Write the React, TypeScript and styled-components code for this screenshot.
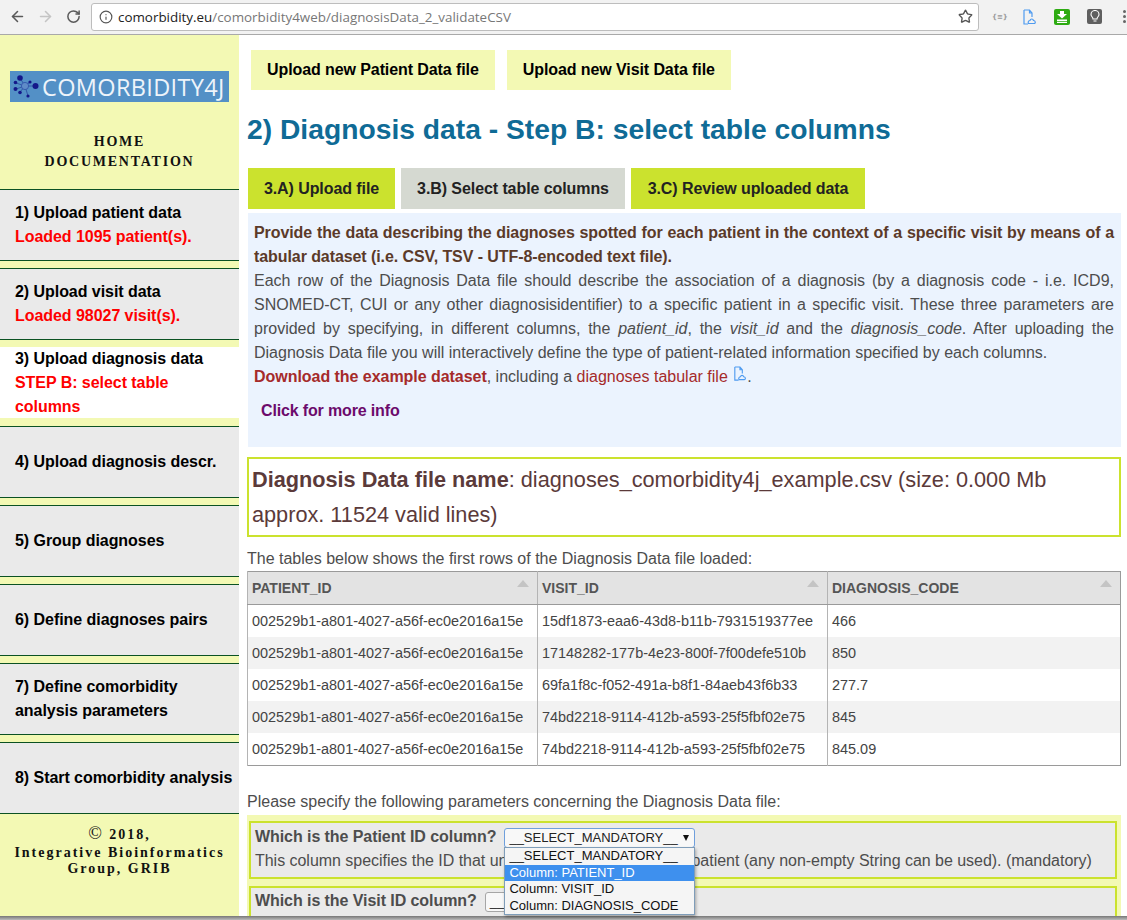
import React from "react";
import styled, { createGlobalStyle } from "styled-components";
import { ArrowLeft, ArrowRight, RotateCw, Info, Star } from "lucide-react";

const GlobalStyle = createGlobalStyle`
  html, body {
    margin: 0;
    padding: 0;
    height: 920px;
    overflow: hidden;
    background: #fff;
  }
  * { box-sizing: border-box; }
`;

const navItems = [
  { title: "1) Upload patient data", status: "Loaded 1095 patient(s)." },
  { title: "2) Upload visit data", status: "Loaded 98027 visit(s)." },
  { title: "3) Upload diagnosis data", status: "STEP B: select table columns", active: true },
  { title: "4) Upload diagnosis descr." },
  { title: "5) Group diagnoses" },
  { title: "6) Define diagnoses pairs" },
  { title: "7) Define comorbidity analysis parameters" },
  { title: "8) Start comorbidity analysis" },
];

const rows = [
  ["002529b1-a801-4027-a56f-ec0e2016a15e", "15df1873-eaa6-43d8-b11b-7931519377ee", "466"],
  ["002529b1-a801-4027-a56f-ec0e2016a15e", "17148282-177b-4e23-800f-7f00defe510b", "850"],
  ["002529b1-a801-4027-a56f-ec0e2016a15e", "69fa1f8c-f052-491a-b8f1-84aeb43f6b33", "277.7"],
  ["002529b1-a801-4027-a56f-ec0e2016a15e", "74bd2218-9114-412b-a593-25f5fbf02e75", "845"],
  ["002529b1-a801-4027-a56f-ec0e2016a15e", "74bd2218-9114-412b-a593-25f5fbf02e75", "845.09"],
];

function LogoMark() {
  return (
    <svg width="26" height="25" viewBox="0 0 26 25">
      <g stroke="#2a4aa0" strokeWidth="0.8">
        <path d="M12 12 L7 4 M12 12 L17 8 M12 12 L23 12 M12 12 L15 22 M12 12 L3 9 M12 12 L3 15 M12 12 L7 18" />
      </g>
      <circle cx="12" cy="12" r="3.6" fill="#5f8cc8" stroke="#2f4fa8" strokeWidth="0.8" />
      <g fill="#14188a">
        <circle cx="7" cy="4" r="2.8" />
        <circle cx="17" cy="8" r="1.6" />
        <circle cx="22.5" cy="12" r="3" />
        <circle cx="15" cy="22" r="1.6" />
        <circle cx="2.5" cy="8.5" r="1.8" />
        <circle cx="2.5" cy="15" r="2" />
        <circle cx="7" cy="18.5" r="1.8" />
      </g>
    </svg>
  );
}

function FileIcon({ size = 16 }: { size?: number }) {
  return (
    <svg width={size} height={size} viewBox="0 0 16 16" fill="none" stroke="#4f9bf0" strokeWidth="1.2">
      <path d="M3 1 H8.5 L11 4 V8 M8.5 1 V4 H11 M3 1 V15 H7" />
      <path d="M7.5 14.5 C6.5 12.5 8 11.5 9 11.5 C9.5 9.5 12 9.5 12.5 11.5 C14.5 11.5 15 14.5 13 14.5 Z" />
    </svg>
  );
}

export default function App() {
  return (
    <>
      <GlobalStyle />
      <Page>
        <BrowserBar>
          <NavIcon><ArrowLeft size={17} color="#5a5a5a" strokeWidth={2.2} /></NavIcon>
          <NavIcon><ArrowRight size={17} color="#c4c4c4" strokeWidth={2.2} /></NavIcon>
          <NavIcon><RotateCw size={15} color="#5a5a5a" strokeWidth={2.4} /></NavIcon>
          <AddressBar>
            <Info size={14} color="#555" />
            <Url>
              <b>comorbidity.eu</b>/comorbidity4web/diagnosisData_2_validateCSV
            </Url>
            <Star size={15} color="#555" strokeWidth={2.2} />
          </AddressBar>
          <Extensions>
            <JsonIcon>{"{≡}"}</JsonIcon>
            <FileIcon />
            <GreenIcon>
              <svg width="12" height="12" viewBox="0 0 12 12" fill="#fff">
                <path d="M4 0 H8 V3 H11 L6 7.5 L1 3 H4 Z M1 8.5 H11 V10 H1 Z M1 10.8 H11 V12 H1 Z" />
              </svg>
            </GreenIcon>
            <BulbIcon>
              <svg width="12" height="13" viewBox="0 0 12 13" fill="none" stroke="#fff" strokeWidth="1.1">
                <path d="M4 9 C4 7 2 6.5 2 4.5 A4 4 0 0 1 10 4.5 C10 6.5 8 7 8 9 Z M4.5 11 H7.5" />
              </svg>
            </BulbIcon>
            <MenuDots>
              <i /><i /><i />
            </MenuDots>
          </Extensions>
        </BrowserBar>

        <Layout>
          <Sidebar>
            <Logo>
              <LogoMark />
              <LogoText>COMORBIDITY4J</LogoText>
            </Logo>
            <SideLinks>
              <div>HOME</div>
              <div>DOCUMENTATION</div>
            </SideLinks>
            <NavList>
              {navItems.map((item) => (
                <NavItem key={item.title} $active={item.active}>
                  <NavTitle>{item.title}</NavTitle>
                  {item.status && <NavStatus>{item.status}</NavStatus>}
                </NavItem>
              ))}
            </NavList>
            <Copyright>
              <CopyYear><span>©</span> 2018,</CopyYear>
              <div>Integrative Bioinformatics</div>
              <div>Group, GRIB</div>
            </Copyright>
          </Sidebar>

          <Main>
            <UploadRow>
              <UploadButton>Upload new Patient Data file</UploadButton>
              <UploadButton>Upload new Visit Data file</UploadButton>
            </UploadRow>
            <Heading>2) Diagnosis data - Step B: select table columns</Heading>
            <Tabs>
              <Tab $w={147}>3.A) Upload file</Tab>
              <Tab $w={224} $current>3.B) Select table columns</Tab>
              <Tab $w={234}>3.C) Review uploaded data</Tab>
            </Tabs>
            <InfoBox>
              <InfoLead>
                Provide the data describing the diagnoses spotted for each patient in the context of a specific visit by
                means of a tabular dataset (i.e. CSV, TSV - UTF-8-encoded text file).
              </InfoLead>
              <p>
                Each row of the Diagnosis Data file should describe the association of a diagnosis (by a diagnosis code -
                i.e. ICD9, SNOMED-CT, CUI or any other diagnosisidentifier) to a specific patient in a specific visit.
                These three parameters are provided by specifying, in different columns, the <em>patient_id</em>, the{" "}
                <em>visit_id</em> and the <em>diagnosis_code</em>. After uploading the Diagnosis Data file you will
                interactively define the type of patient-related information specified by each columns.
              </p>
              <p>
                <DownloadLink>Download the example dataset</DownloadLink>, including a{" "}
                <PlainLink>diagnoses tabular file</PlainLink> <FileIcon size={15} />.
              </p>
              <MoreInfo>Click for more info</MoreInfo>
            </InfoBox>

            <FileBox>
              <b>Diagnosis Data file name</b>: diagnoses_comorbidity4j_example.csv (size: 0.000 Mb approx. 11524 valid lines)
            </FileBox>

            <Caption>The tables below shows the first rows of the Diagnosis Data file loaded:</Caption>
            <PreviewTable>
              <colgroup>
                <col style={{ width: 290 }} />
                <col style={{ width: 290 }} />
                <col />
              </colgroup>
              <thead>
                <tr>
                  {["PATIENT_ID", "VISIT_ID", "DIAGNOSIS_CODE"].map((h) => (
                    <HeadCell key={h}>
                      {h}
                      <SortArrow />
                    </HeadCell>
                  ))}
                </tr>
              </thead>
              <tbody>
                {rows.map((row, i) => (
                  <BodyRow key={i} $odd={i % 2 === 1}>
                    {row.map((c, j) => (
                      <BodyCell key={j}>{c}</BodyCell>
                    ))}
                  </BodyRow>
                ))}
              </tbody>
            </PreviewTable>

            <ParamsIntro>Please specify the following parameters concerning the Diagnosis Data file:</ParamsIntro>
            <ParamsPanel>
              <ParamBox>
                <ParamLine>
                  <b>Which is the Patient ID column?</b>
                  <SelectBox $focused>
                    __SELECT_MANDATORY__
                    <Caret />
                    <DropMenu>
                      <DropOption>__SELECT_MANDATORY__</DropOption>
                      <DropOption $selected>Column: PATIENT_ID</DropOption>
                      <DropOption>Column: VISIT_ID</DropOption>
                      <DropOption>Column: DIAGNOSIS_CODE</DropOption>
                    </DropMenu>
                  </SelectBox>
                </ParamLine>
                <ParamHelp>
                  This column specifies the ID that uniquely identifies a specific patient (any non-empty String can be used).
                  (mandatory)
                </ParamHelp>
              </ParamBox>
              <ParamBox>
                <ParamLine>
                  <b>Which is the Visit ID column?</b>
                  <SelectBox>__SELECT_MANDATORY__<Caret /></SelectBox>
                </ParamLine>
              </ParamBox>
            </ParamsPanel>
          </Main>
        </Layout>
        <StatusEdge />
      </Page>
    </>
  );
}

const Page = styled.div`
  position: relative;
  width: 1127px;
  height: 920px;
  overflow: hidden;
  font-family: "Liberation Sans", Arial, sans-serif;
`;

const BrowserBar = styled.div`
  display: flex;
  align-items: center;
  height: 35px;
  padding: 0 0 1px 3px;
  background: #f2f2f2;
  border-bottom: 1px solid #a9a9a9;
`;

const NavIcon = styled.div`
  display: flex;
  justify-content: center;
  width: 28px;
`;

const AddressBar = styled.div`
  display: flex;
  flex: 0 0 888px;
  align-items: center;
  height: 28px;
  margin-left: 4px;
  padding: 0 5px 0 7px;
  background: #fff;
  border: 1px solid #bdbdbd;
  border-radius: 3px;
`;

const Url = styled.div`
  flex: 1;
  margin-left: 5px;
  font-family: "Open Sans", sans-serif;
  font-size: 13.4px;
  color: #777;
  white-space: nowrap;
  b {
    font-weight: 400;
    color: #222;
  }
`;

const Extensions = styled.div`
  display: flex;
  align-items: center;
  gap: 17px;
  margin-left: 13px;
`;

const JsonIcon = styled.div`
  width: 12px;
  font-family: "DejaVu Sans", sans-serif;
  font-size: 7px;
  font-weight: 700;
  color: #999;
  white-space: nowrap;
`;

const GreenIcon = styled.div`
  display: flex;
  align-items: center;
  justify-content: center;
  width: 16px;
  height: 16px;
  background: #2eab12;
  border-radius: 2px;
`;

const BulbIcon = styled.div`
  display: flex;
  align-items: center;
  justify-content: center;
  width: 15px;
  height: 15px;
  background: #5f5f5f;
  border-radius: 2px;
`;

const MenuDots = styled.div`
  display: flex;
  flex-direction: column;
  gap: 2px;
  margin-left: 4px;
  i {
    width: 3px;
    height: 3px;
    background: #666;
    border-radius: 50%;
  }
`;

const Layout = styled.div`
  display: flex;
  height: 885px;
`;

const Sidebar = styled.aside`
  flex: 0 0 239px;
  background: #f3f9b4;
  padding-top: 36px;
`;

const Logo = styled.div`
  display: flex;
  align-items: center;
  width: 219px;
  height: 31px;
  margin-left: 10px;
  padding-left: 3px;
  background: #5390c6;
`;

const LogoText = styled.div`
  margin-left: 3px;
  font-family: "Open Sans", sans-serif;
  font-size: 23.5px;
  letter-spacing: 0.35px;
  color: #eef4fa;
`;

const SideLinks = styled.div`
  margin-top: 30px;
  height: 57px;
  font-family: "Liberation Serif", serif;
  font-size: 14px;
  font-weight: 700;
  line-height: 20px;
  letter-spacing: 1.75px;
  text-align: center;
  color: #111;
`;

const NavList = styled.div`
  display: flex;
  flex-direction: column;
  gap: 7px;
`;

const NavItem = styled.div<{ $active?: boolean }>`
  display: flex;
  flex-direction: column;
  justify-content: center;
  height: ${(p) => (p.$active ? "71px" : "72px")};
  margin-bottom: ${(p) => (p.$active ? "1px" : "0")};
  padding: 0 3px 0 15px;
  background: ${(p) => (p.$active ? "#fff" : "#eaeaea")};
  border-top: ${(p) => (p.$active ? "none" : "1px solid #0b5223")};
  border-bottom: ${(p) => (p.$active ? "none" : "1px solid #0b5223")};
  font-size: 16px;
  font-weight: 700;
  line-height: 24px;
  letter-spacing: -0.05px;
`;

const NavTitle = styled.div`
  color: #000;
`;

const NavStatus = styled.div`
  color: #f00;
`;

const Copyright = styled.div`
  height: 100px;
  padding-top: 11px;
  font-family: "Liberation Serif", serif;
  font-size: 14px;
  font-weight: 700;
  line-height: 16px;
  letter-spacing: 2px;
  text-align: center;
  color: #111;
`;

const CopyYear = styled.div`
  margin-bottom: 2px;
  span {
    font-size: 18px;
    font-weight: 400;
  }
`;

const Main = styled.main`
  flex: 1;
  min-width: 0;
  padding: 15px 6px 0 8px;
`;

const UploadRow = styled.div`
  display: flex;
  gap: 12px;
  margin-left: 4px;
`;

const UploadButton = styled.div`
  padding: 0 16px;
  height: 40px;
  background: #f3f9b4;
  font-size: 16px;
  font-weight: 700;
  line-height: 40px;
  letter-spacing: -0.09px;
  color: #000;
`;

const Heading = styled.h1`
  margin: 21px 0 21px;
  font-size: 28.25px;
  font-weight: 700;
  line-height: 36px;
  color: #0f6b96;
`;

const Tabs = styled.div`
  display: flex;
  gap: 6px;
  margin-left: 1px;
`;

const Tab = styled.div<{ $w: number; $current?: boolean }>`
  width: ${(p) => p.$w}px;
  height: 41px;
  background: ${(p) => (p.$current ? "#d5d9d1" : "#cbe22e")};
  font-size: 16px;
  font-weight: 700;
  line-height: 41px;
  letter-spacing: -0.08px;
  text-align: center;
  color: #222;
`;

const InfoBox = styled.section`
  height: 234px;
  margin: 4px 0 10px 1px;
  padding: 8px 7px 0 6px;
  background: #ebf3fe;
  font-size: 16px;
  line-height: 24px;
  color: #4d4d4d;
  text-align: justify;
  p {
    margin: 0;
  }
  svg {
    vertical-align: 1px;
  }
`;

const InfoLead = styled.p`
  font-weight: 700;
  letter-spacing: -0.08px;
  color: #5b3a29;
`;

const DownloadLink = styled.b`
  letter-spacing: -0.04px;
  color: #a52a2a;
`;

const PlainLink = styled.span`
  color: #a52a2a;
`;

const MoreInfo = styled.div`
  margin: 10px 0 0 7px;
  font-weight: 700;
  letter-spacing: -0.15px;
  color: #6c0a6c;
`;

const FileBox = styled.div`
  height: 80px;
  padding: 3px 3px;
  border: 2px solid #cbe22e;
  font-size: 21.7px;
  line-height: 35px;
  color: #5b3a3a;
`;

const Caption = styled.div`
  margin-top: 13px;
  font-size: 16px;
  line-height: 18px;
  color: #4d4d4d;
`;

const PreviewTable = styled.table`
  width: 874px;
  margin-top: 3px;
  border-collapse: collapse;
  table-layout: fixed;
  border: 1px solid #9a9a9a;
  font-size: 14.45px;
  color: #444;
`;

const HeadCell = styled.th`
  position: relative;
  height: 33px;
  padding: 0 4px;
  background: #e3e3e3;
  border-left: 1px solid #b4b4b4;
  border-bottom: 1px solid #9a9a9a;
  font-size: 14px;
  font-weight: 700;
  text-align: left;
  color: #555;
`;

const SortArrow = styled.span`
  position: absolute;
  top: 8px;
  right: 8px;
  border-left: 6px solid transparent;
  border-right: 6px solid transparent;
  border-bottom: 7px solid #c4c4c4;
`;

const BodyRow = styled.tr<{ $odd: boolean }>`
  background: ${(p) => (p.$odd ? "#f2f2f2" : "#fff")};
  &:last-child td {
    height: 33px;
  }
`;

const BodyCell = styled.td`
  height: 32px;
  padding: 0 4px;
  border-left: 1px solid #b4b4b4;
  white-space: nowrap;
`;

const ParamsIntro = styled.div`
  margin-top: 27px;
  font-size: 16px;
  line-height: 18px;
  color: #4d4d4d;
`;

const ParamsPanel = styled.div`
  display: flex;
  flex-direction: column;
  gap: 7px;
  margin-top: 4px;
  padding: 6px 0 0 2px;
  width: 874px;
  background: #f3f9b4;
`;

const ParamBox = styled.div`
  height: 58px;
  padding: 2px 4px;
  width: 868px;
  border: 2px solid #cbe22e;
  background: #eaeaea;
  font-size: 16px;
  line-height: 24px;
  color: #4d4d4d;
  & + & {
    padding-top: 1px;
  }
`;

const ParamLine = styled.div`
  display: flex;
  align-items: center;
  gap: 8px;
  b {
    letter-spacing: -0.07px;
  }
`;

const SelectBox = styled.div<{ $focused?: boolean }>`
  position: relative;
  width: 191px;
  height: 20px;
  margin-top: 2px;
  padding-left: 4px;
  background: #f8f8f8;
  border: 1px solid ${(p) => (p.$focused ? "#6f9fdc" : "#a6a6a6")};
  border-radius: 3px;
  font-size: 13px;
  line-height: 18px;
  color: #222;
`;

const Caret = styled.span`
  position: absolute;
  top: 6px;
  right: 5px;
  border-left: 3.5px solid transparent;
  border-right: 3.5px solid transparent;
  border-top: 6px solid #111;
`;

const DropMenu = styled.div`
  position: absolute;
  z-index: 2;
  top: 18px;
  left: -1px;
  width: 191px;
  background: #f5f5f5;
  border: 1px solid #7f9db9;
  box-shadow: 1px 2px 3px rgba(0, 0, 0, 0.3);
`;

const DropOption = styled.div<{ $selected?: boolean }>`
  height: 16.5px;
  padding-left: 4px;
  background: ${(p) => (p.$selected ? "#3e90ee" : "transparent")};
  font-size: 13px;
  line-height: 16.5px;
  white-space: nowrap;
  color: ${(p) => (p.$selected ? "#fff" : "#111")};
`;

const ParamHelp = styled.div`
  line-height: 24px;
  letter-spacing: -0.03px;
  white-space: nowrap;
`;

const StatusEdge = styled.div`
  position: absolute;
  left: 0;
  right: 0;
  bottom: 0;
  height: 4px;
  background: linear-gradient(#777, #bbb);
`;
